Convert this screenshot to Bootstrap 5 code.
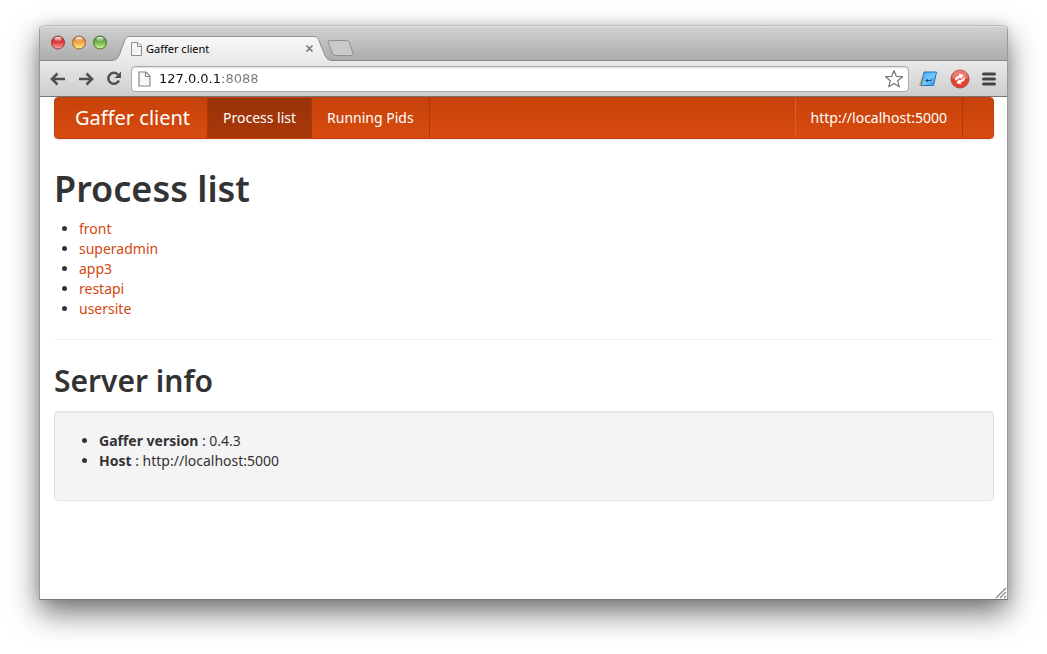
<!DOCTYPE html>
<html lang="en">
<head>
<meta charset="utf-8">
<meta name="viewport" content="width=device-width, initial-scale=1">
<title>Gaffer client</title>
<link href="https://cdn.jsdelivr.net/npm/bootstrap@5.3.0/dist/css/bootstrap.min.css" rel="stylesheet">
<style>
  body {
    font: 14px/20px "Noto Sans", "Open Sans", sans-serif;
    color: #333;
    background: #fff;
    padding: 25px 39px 54px;
    min-height: 100vh;
  }
  .window {
    background: #fff;
    border: 1px solid #999;
    border-top: 0;
    border-bottom-color: #777;
    border-radius: 5px 5px 0 0;
    box-shadow: 0 13px 30px rgba(0, 0, 0, .55), 0 0 12px rgba(0, 0, 0, .12);
  }
  .tabstrip {
    height: 36px;
    padding-left: 11px;
    background: linear-gradient(#d2d2d2, #acacac);
    border-top: 1px solid #bbb;
    border-bottom: 1px solid #888;
    border-radius: 5px 5px 0 0;
    box-shadow: inset 0 1px #e2e2e2;
  }
  .lights { gap: 7px; padding-top: 9px; }
  .plain { border: 0; padding: 0; background: none; line-height: 0; color: inherit; }
  .tab { height: 25px; margin: 10px 0 -1px 5px; z-index: 1; }
  .tab-body {
    width: 184px;
    padding: 0 0 1px 1px;
    font-size: 11px;
    color: #000;
    background: linear-gradient(#f8f8f8, #e9e9e9);
    border-top: 1px solid #929292;
  }
  .new-tab { margin: 14px 0 0 -5px; }
  .toolbar {
    height: 36px;
    padding: 0 11px 0 10px;
    background: linear-gradient(#e9e9e9, #cdcdcd);
    border-bottom: 1px solid #777;
  }
  .address {
    height: 26px;
    margin: 0 9px;
    padding: 0 4px 0 6px;
    background: #fff;
    border: 1px solid #aaa;
    border-radius: 4px;
    box-shadow: inset 0 1px 1px #ddd;
  }
  .address input {
    font: 13px/20px "DejaVu Sans", sans-serif;
    border: 0;
    padding: 0;
    min-width: 0;
    outline: 0;
    color: transparent;
    background: linear-gradient(to right, #111 62px, #777 62px);
    -webkit-background-clip: text;
    background-clip: text;
  }
  .page { padding: 0 13px 98px 14px; }
  .page a { color: #d3480c; text-decoration: none; }
  .topnav {
    min-height: 42px;
    padding: 0;
    background: linear-gradient(#c7430b, #d84b0e);
    border: 1px solid #bf400a;
    border-radius: 4px;
    box-shadow: 0 1px 3px rgba(0, 0, 0, .08);
  }
  .page .topnav a { color: #fff; line-height: 20px; border-right: 1px solid #a8390a; }
  .page .topnav .navbar-nav .nav-link { padding: 10px 15px; }
  .page .topnav .navbar-nav .active { color: #fff; background: linear-gradient(#98330a, #aa3808); }
  .page .topnav a.navbar-brand { font-size: 20px; padding: 10px 20px; margin: 0; width: 153px; }
  .page .topnav .server { border-left: 1px solid #d9602c; margin-right: 30px; }
  .page .topnav .pids { padding-right: 16px; }
  h1, h2 { font-weight: 600; line-height: 40px; margin: 0 0 10px; }
  h1 { font-size: 36px; margin-top: 30px; }
  h2 { font-size: 30px; }
  ul.bullets { margin: 0 0 20px; padding-left: 25px; }
  .page hr { margin: 0 0 21px; border-color: #eee; opacity: 1; }
  .info {
    background: #f4f4f4;
    border: 1px solid #e2e2e2;
    border-radius: 4px;
    padding: 19px 19px 9px;
    box-shadow: inset 0 1px 1px rgba(0, 0, 0, .05);
  }
  .grip { right: 0; bottom: 0; }
</style>
</head>
<body>
<div class="window position-relative">
  <header>
    <div class="tabstrip d-flex align-items-start">
      <svg width="0" height="0" class="position-absolute" aria-hidden="true">
        <defs>
          <linearGradient id="red" x2="0" y2="1"><stop stop-color="#b33030"/><stop offset=".5" stop-color="#e13b40"/><stop offset="1" stop-color="#ffb0a8"/></linearGradient>
          <linearGradient id="amber" x2="0" y2="1"><stop stop-color="#c56a20"/><stop offset=".5" stop-color="#f3a844"/><stop offset="1" stop-color="#fff08c"/></linearGradient>
          <linearGradient id="green" x2="0" y2="1"><stop stop-color="#3f7f26"/><stop offset=".5" stop-color="#77b950"/><stop offset="1" stop-color="#d3f89c"/></linearGradient>
          <linearGradient id="shine" x2="0" y2="1"><stop stop-color="#fff" stop-opacity=".95"/><stop offset="1" stop-color="#fff" stop-opacity=".1"/></linearGradient>
          <linearGradient id="tabfill" x2="0" y2="1"><stop stop-color="#f8f8f8"/><stop offset="1" stop-color="#e9e9e9"/></linearGradient>
          <linearGradient id="blue" x2="1" y2="1"><stop stop-color="#3d9ee8"/><stop offset=".5" stop-color="#72c8ff"/><stop offset="1" stop-color="#2f8de0"/></linearGradient>
        </defs>
      </svg>
      <div class="lights d-flex">
        <button class="plain" aria-label="Close"><svg width="14" height="15"><circle cx="7" cy="7.5" r="6.5" fill="url(#red)" stroke="#983a3a"/><ellipse cx="7" cy="4" rx="3.5" ry="2.3" fill="url(#shine)"/></svg></button>
        <button class="plain" aria-label="Minimize"><svg width="14" height="15"><circle cx="7" cy="7.5" r="6.5" fill="url(#amber)" stroke="#9c602c"/><ellipse cx="7" cy="4" rx="3.5" ry="2.3" fill="url(#shine)"/></svg></button>
        <button class="plain" aria-label="Zoom"><svg width="14" height="15"><circle cx="7" cy="7.5" r="6.5" fill="url(#green)" stroke="#47752f"/><ellipse cx="7" cy="4" rx="3.5" ry="2.3" fill="url(#shine)"/></svg></button>
      </div>
      <div class="tab d-flex position-relative">
        <svg width="18" height="25"><path d="M0 24.5C5 24 6 22 8 17L12 6C13.500 2 15 .5 18 .5V25H0Z" fill="url(#tabfill)"/><path d="M0 24.500C5 24 6 22 8 17L12 6C13.500 2 15 .5 18 .5" fill="none" stroke="#8c8c8c"/></svg>
        <div class="tab-body d-flex align-items-center">
          <svg width="11" height="14" class="me-1" aria-hidden="true"><path d="M.5.5H7L10.500 4V13.500H.5ZM6.500.5V4.500H10.500" fill="#f5f5f5" stroke="#8e8e8e"/></svg>
          <span class="flex-grow-1">Gaffer client</span>
          <button class="plain" aria-label="Close tab"><svg width="9" height="9"><path d="M1.500 1.500L7.500 7.500M7.500 1.500L1.500 7.500" stroke="#777" stroke-width="1.600"/></svg></button>
        </div>
        <svg width="18" height="25"><path d="M0 .5C3 .5 4 2 5.500 6L10 17C12 22 13 24 18 24.500V25H0Z" fill="url(#tabfill)"/><path d="M0 .5C3 .5 4 2 5.500 6L10 17C12 22 13 24 18 24.500" fill="none" stroke="#8c8c8c"/></svg>
      </div>
      <button class="plain new-tab" aria-label="New tab"><svg width="27" height="16" class="d-block"><path d="M3 .5H19C21 .5 22 1.500 22.500 3L26 13C26.500 14.500 26 15.500 24 15.500H9C7 15.500 6 14.500 5.300 13L1.500 3C1 1.500 1 .5 3 .5Z" fill="#c9c9c9" stroke="#919191"/></svg></button>
    </div>
    <div class="toolbar d-flex align-items-center">
      <button class="plain" aria-label="Back"><svg width="16" height="14"><path d="M7.500 1.500L2 7L7.500 12.500M2.500 7H15" fill="none" stroke="#505050" stroke-width="2.600"/></svg></button>
      <button class="plain ms-2 me-2 ps-1 pe-1" aria-label="Forward"><svg width="16" height="14"><path d="M8.500 1.500L14 7L8.500 12.500M13.500 7H1" fill="none" stroke="#505050" stroke-width="2.600"/></svg></button>
      <button class="plain" aria-label="Reload"><svg width="16" height="15"><path d="M11.800 3.500A5.500 5.500 0 1 0 12.900 9.500" fill="none" stroke="#505050" stroke-width="2.500"/><path d="M15 .5V7H8.500Z" fill="#505050"/></svg></button>
      <form class="address d-flex align-items-center flex-grow-1">
        <svg width="13" height="16" class="me-2" aria-hidden="true"><path d="M1 1H8L12 5V15H1ZM7.500 1V5.500H12" fill="#f8f8f8" stroke="#858585" stroke-width="1.200"/></svg>
        <input type="text" class="flex-grow-1" aria-label="Address" value="127.0.0.1:8088">
        <button type="button" class="plain" aria-label="Bookmark"><svg width="20" height="20"><path d="M10 1.500L12.300 7.300L18.500 7.700L13.700 11.700L15.300 17.800L10 14.500L4.700 17.800L6.300 11.700L1.500 7.700L7.700 7.300Z" fill="#fff" stroke="#777" stroke-width="1.200" stroke-linejoin="round"/></svg></button>
      </form>
      <button class="plain" aria-label="Developer extension"><svg width="20" height="18"><path d="M1 15L4 7L6 16H0Z" fill="#f1ab3c"/><path d="M6 2H18.500L15.500 15.500H3Z" fill="url(#blue)" stroke="#2573b5"/><path d="M7.500 10.500L9.500 9.500V11.500ZM9 10.500H13L14 9.500" fill="#173e63" stroke="#173e63" stroke-width=".8"/></svg></button>
      <button class="plain ms-2 me-2 ps-1 pe-1" aria-label="Sync extension"><svg width="20" height="20"><circle cx="10" cy="10" r="9" fill="#e8402e" stroke="#a94a40"/><path d="M2 9A8 8 0 0 1 18 9Q10 12 2 9" fill="#fff" opacity=".3"/><g transform="rotate(-25 10 10)"><path d="M5 9.500C5 7 7 6 11 6.500V4.500L15 8L11 10.500V8.800C8.500 8.500 7.500 9 7 9.500ZM15 10.500C15 13 13 14 9 13.500V15.500L5 12L9 9.500V11.200C11.500 11.500 12.500 11 13 10.500Z" fill="#fff"/></g></svg></button>
      <button class="plain" aria-label="Menu"><svg width="14" height="14"><path d="M1.500 2H12.500M1.500 7H12.500M1.500 12H12.500" stroke="#444" stroke-width="3" stroke-linecap="round"/></svg></button>
    </div>
  </header>
  <main class="page">
    <nav class="topnav navbar navbar-expand flex-nowrap align-items-stretch">
      <a class="navbar-brand" href="#">Gaffer client</a>
      <div class="navbar-nav flex-grow-1">
        <a class="nav-link active" aria-current="page" href="#processes">Process list</a>
        <a class="nav-link" href="#pids">Running Pids</a>
        <a class="nav-link server ms-auto" href="#server">http://localhost:5000</a>
      </div>
    </nav>
    <h1 id="processes">Process list</h1>
    <ul class="bullets">
      <li><a href="#front">front</a></li>
      <li><a href="#superadmin">superadmin</a></li>
      <li><a href="#app3">app3</a></li>
      <li><a href="#restapi">restapi</a></li>
      <li><a href="#usersite">usersite</a></li>
    </ul>
    <hr>
    <h2 id="server">Server info</h2>
    <section class="info">
      <ul class="bullets">
        <li><strong>Gaffer version</strong> : 0.4.3</li>
        <li><strong>Host</strong> : http://localhost:5000</li>
      </ul>
    </section>
  </main>
  <svg class="grip position-absolute" width="12" height="12" aria-hidden="true"><path d="M1 11L11 1M5 11L11 5M9 11L11 9" stroke="#888" stroke-width="1.200"/></svg>
</div>
</body>
</html>
